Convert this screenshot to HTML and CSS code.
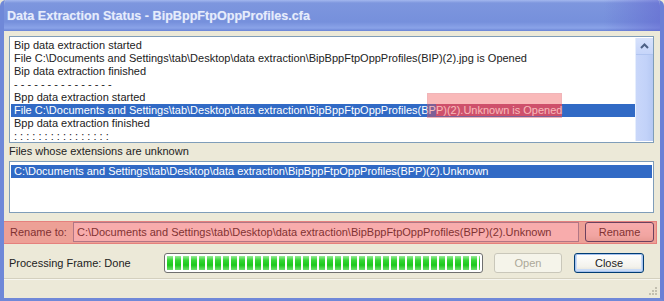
FILE: index.html
```html
<!DOCTYPE html>
<html lang="en">
<head>
    <meta charset="UTF-8">
    <title>Data Extraction Status</title>
    <link rel="stylesheet" href="styles.css">
</head>
<body>
<div class="window">
    <div class="titlebar">
        <span class="title">Data Extraction Status - BipBppFtpOppProfiles.cfa</span>
    </div>
    <div class="content">
        <div class="listbox log">
            <div class="lines">
                <div class="line">Bip data extraction started</div>
                <div class="line">File C:\Documents and Settings\tab\Desktop\data extraction\BipBppFtpOppProfiles(BIP)(2).jpg is Opened</div>
                <div class="line">Bip data extraction finished</div>
                <div class="line">- - - - - - - - - - - - - - -</div>
                <div class="line">Bpp data extraction started</div>
                <div class="line selected">File C:\Documents and Settings\tab\Desktop\data extraction\BipBppFtpOppProfiles(BP<span class="marked">P)(2).Unknown is Opened</span></div>
                <div class="line">Bpp data extraction finished</div>
                <div class="line">: : : : : : : : : : : : : : : :</div>
                <!-- annotation box drawn over the list -->
                <div class="mark-box"></div>
            </div>
            <div class="scrollbar">
                <div class="scroll-up">
                    <svg width="9" height="6" viewBox="0 0 9 6"><path d="M1 5 L4.5 1.5 L8 5" fill="none" stroke="#4d6185" stroke-width="2"/></svg>
                </div>
            </div>
        </div>

        <div class="caption">Files whose extensions are unknown</div>

        <div class="listbox files">
            <div class="line selected">C:\Documents and Settings\tab\Desktop\data extraction\BipBppFtpOppProfiles(BPP)(2).Unknown</div>
        </div>

        <div class="rename-row">
            <span class="label">Rename to:</span>
            <div class="textfield">C:\Documents and Settings\tab\Desktop\data extraction\BipBppFtpOppProfiles(BPP)(2).Unknown</div>
            <button class="btn rename">Rename</button>
            <div class="mark-band"></div>
        </div>

        <div class="status-row">
            <span class="label">Processing Frame: Done</span>
            <div class="progress"><div class="progress-fill"></div></div>
            <button class="btn open" disabled>Open</button>
            <button class="btn close">Close</button>
        </div>
    </div>
    <div class="statusbar">
        <svg class="grip" width="11" height="11" viewBox="0 0 11 11">
            <g fill="#c2bfb0">
                <rect x="8" y="0" width="2" height="2"/>
                <rect x="5" y="3" width="2" height="2"/><rect x="8" y="3" width="2" height="2"/>
                <rect x="2" y="6" width="2" height="2"/><rect x="5" y="6" width="2" height="2"/><rect x="8" y="6" width="2" height="2"/>
            </g>
        </svg>
    </div>
</div>
</body>
</html>
```

FILE: styles.css
```css
body {
    margin: 0;
    padding: 0;
    font-family: 'Liberation Sans', Arial, sans-serif;
    font-size: 11px;
    color: #222;
    background: #ece9d8;
}

.window {
    width: 664px;
    height: 301px;
    box-sizing: border-box;
    display: flex;
    flex-direction: column;
    background: #ece9d8;
    border-left: 4px solid #6f88d8;
    border-right: 4px solid #6b80d6;
    border-bottom: 3px solid #7088d8;
    border-radius: 6px 6px 0 0;
    overflow: hidden;
}

.titlebar {
    height: 31px;
    margin: 0 -4px;
    flex: none;
    display: flex;
    align-items: center;
    padding-left: 7px;
    background: linear-gradient(#a3b7ee 0, #7d96de 3px, #7690dc 22px, #8aa3e8 28px, #6a84d6 31px);
    border-radius: 6px 6px 0 0;
    position: relative;
}

.titlebar::after {
    content: '';
    position: absolute;
    top: 0;
    right: 0;
    bottom: 0;
    width: 60px;
    background: linear-gradient(to right, rgba(100, 100, 210, 0), rgba(95, 95, 205, 0.55));
    border-radius: 0 6px 0 0;
}

.title {
    color: #e6ecfb;
    font-weight: bold;
    font-size: 12.6px;
    text-shadow: 0 0 1px rgba(200, 215, 250, 0.6);
}

.content {
    flex: 1;
    padding: 5px 6px 0 5px;
    display: flex;
    flex-direction: column;
}

.listbox {
    background: #fff;
    border: 1px solid #7f9db9;
    box-sizing: border-box;
    overflow: hidden;
}

.log {
    height: 107px;
    display: flex;
}

.lines {
    flex: 1;
    padding: 2px 0 0 1px;
    position: relative;
}

.line {
    height: 13px;
    line-height: 13px;
    padding-left: 3px;
    white-space: nowrap;
}

.selected {
    background: #316ac5;
    color: #fff;
}

.marked {
    background: #b8507e;
    color: #fff;
}

.mark-box {
    position: absolute;
    left: 418px;
    top: 57px;
    width: 133px;
    height: 23px;
    background: rgba(240, 80, 80, 0.4);
    box-shadow: 0 0 0 1px rgba(225, 90, 100, 0.45);
}

.scrollbar {
    width: 17px;
    flex: none;
    margin: 1px 0 1px 0;
    background: linear-gradient(to right, #c9d7fa, #c2d2f9 60%, #b7c9f3);
    border-left: 1px solid #e6eefd;
}

.scroll-up {
    height: 16px;
    display: flex;
    align-items: center;
    justify-content: center;
    background: linear-gradient(#d7e2fc, #c6d5fa);
    border-bottom: 1px solid #b0c4f0;
}

.caption {
    height: 18px;
    line-height: 17px;
}

.files {
    height: 52px;
    padding: 3px 1px 0 1px;
}

.rename-row {
    margin-top: 9px;
    height: 20px;
    display: flex;
    align-items: center;
    position: relative;
}

.label {
    white-space: nowrap;
}

.rename-row .label {
    width: 63px;
    padding-left: 1px;
    flex: none;
}

.textfield {
    width: 506px;
    height: 20px;
    box-sizing: border-box;
    border: 1px solid #7f9db9;
    background: #fff;
    line-height: 18px;
    padding-left: 3px;
    white-space: nowrap;
    overflow: hidden;
}

.btn {
    font-family: 'Liberation Sans', Arial, sans-serif;
    font-size: 11px;
    color: #222;
    height: 20px;
    box-sizing: border-box;
    border: 1px solid #003c74;
    border-radius: 3px;
    background: linear-gradient(#ffffff, #f3f2ec 70%, #e2dfd3);
    padding: 0;
}

.rename {
    width: 69px;
    margin-left: 6px;
}

.mark-band {
    position: absolute;
    left: -9px;
    right: -3px;
    top: -1px;
    bottom: -2px;
    background: rgba(240, 70, 70, 0.45);
    box-shadow: inset 0 0 0 1px rgba(215, 70, 80, 0.35);
}

.status-row {
    margin-top: 11px;
    height: 20px;
    display: flex;
    align-items: center;
}

.status-row .label {
    width: 155px;
    flex: none;
}

.progress {
    width: 319px;
    height: 20px;
    box-sizing: border-box;
    border: 1px solid #6f6f6f;
    border-radius: 3px;
    background: #fff;
    padding: 2px;
}

.progress-fill {
    height: 100%;
    background:
        repeating-linear-gradient(to right, transparent 0 6px, #fff 6px 8px),
        linear-gradient(#9aeb9a, #34d634 30%, #1cc81c 65%, #6de06d);
}

.open {
    width: 68px;
    margin-left: 11px;
    border-color: #c9c7ba;
    color: #aca899;
    background: #f5f4ea;
}

.close {
    width: 70px;
    margin-left: 12px;
    box-shadow: inset 0 0 0 1px #a6c2ee, inset 0 -1px 0 2px #c9dbf6;
}

.statusbar {
    margin-top: 5px;
    height: 20px;
    flex: none;
    border-top: 1px solid #d4d0bf;
    box-shadow: inset 0 1px 0 #f7f6ef;
    position: relative;
}

.grip {
    position: absolute;
    right: 2px;
    bottom: 1px;
}
```
